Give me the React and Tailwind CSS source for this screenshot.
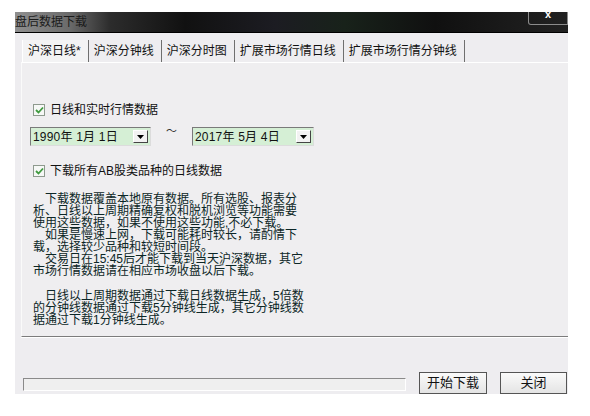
import React from 'react';

const tabs = ['沪深日线*', '沪深分钟线', '沪深分时图', '扩展市场行情日线', '扩展市场行情分钟线'];

const notes = [
  '　下载数据覆盖本地原有数据。所有选股、报表分',
  '析、日线以上周期精确复权和脱机浏览等功能需要',
  '使用这些数据，如果不使用这些功能,不必下载。',
  '　如果是慢速上网，下载可能耗时较长，请酌情下',
  '载，选择较少品种和较短时间段。',
  '　交易日在15:45后才能下载到当天沪深数据，其它',
  '市场行情数据请在相应市场收盘以后下载。',
  '',
  '　日线以上周期数据通过下载日线数据生成，5倍数',
  '的分钟线数据通过下载5分钟线生成，其它分钟线数',
  '据通过下载1分钟线生成。',
];

function Check() {
  return (
    <div className="w-[12px] h-[12px] border border-[#8e9a8e] bg-[#f6f8f6] flex items-center justify-center">
      <svg width="9" height="8" viewBox="0 0 9 8">
        <path d="M1 4 L3.5 6.5 L8 1.5" fill="none" stroke="#3f9a3f" strokeWidth="1.8" />
      </svg>
    </div>
  );
}

function DateBox({ text, w }) {
  return (
    <div className={`h-[19px] ${w} bg-[#d5efd5] border border-t-[#7a7a7a] border-l-[#7a7a7a] border-b-[#dcdcdc] border-r-[#dcdcdc] flex items-center justify-between pl-[2px] pr-[2px]`}>
      <span className="text-[12px] text-[#111] whitespace-pre tracking-[0.2px]">{text}</span>
      <div className="w-[15px] h-[13px] bg-[#f2f2f2] border border-t-white border-l-white border-b-[#444] border-r-[#444] flex items-center justify-center">
        <svg width="7" height="4" viewBox="0 0 7 4"><path d="M0 0 H7 L3.5 4 Z" fill="#000" /></svg>
      </div>
    </div>
  );
}

export default function App() {
  return (
    <div
      className="w-[590px] h-[416px] bg-white pt-[12px] pl-[15px] overflow-hidden"
      style={{ fontFamily: '"Liberation Sans", "Noto Sans CJK SC", sans-serif' }}
    >
      <div className="w-[553px] h-[382px] bg-[#eeedf0] flex flex-col">
        {/* title bar */}
        <div className="relative h-[21px] border-b border-black bg-[linear-gradient(90deg,#8f8f8f_0px,#6a6a6a_55px,#2c2c2c_95px,#111_170px,#1c1c22_260px,#18221a_330px,#101010_420px,#222_553px)] flex items-center">
          <span className="text-[12px] text-[#1b1b1b] leading-none">盘后数据下载</span>
          <div className="absolute right-0 top-0 w-[40px] h-[13px] border border-t-0 border-[#8c8c8c] rounded-bl-[3px] flex justify-center">
            <span className="text-white text-[11px] font-bold leading-[7px] -mt-[1px]">x</span>
          </div>
        </div>

        {/* tabs */}
        <div className="pt-[7px] pl-[7px] flex h-[29px]">
          {tabs.map((t, i) => (
            <div
              key={t}
              className={`h-[22px] flex items-center pl-[5px] pr-[7px] border-r border-[#6f6f6f] text-[12px] text-[#111] whitespace-pre ${i === 0 ? 'bg-[#f3f3f4] border-l border-l-white' : ''}`}
            >
              {t}
            </div>
          ))}
        </div>

        {/* panel */}
        <div className="ml-[6px] h-[275px] border-t border-l border-t-white border-l-[#fafafa] border-b border-b-[#7c7c7c] shadow-[0_1px_0_#fff] bg-[#efeef0] pl-[8px] pt-[41px]">
          <div className="ml-[3px] flex items-center gap-[5px] h-[12px]">
            <Check />
            <span className="text-[12px] text-[#111]">日线和实时行情数据</span>
          </div>
          <div className="mt-[11px] flex items-center">
            <DateBox text="1990年 1月 1日" w="w-[121px]" />
            <span className="ml-[15px] mr-[15px] text-[11px] text-[#333] -mt-[10px]">～</span>
            <DateBox text="2017年 5月 4日" w="w-[122px]" />
          </div>
          <div className="mt-[19px] ml-[3px] flex items-center gap-[5px] h-[12px]">
            <Check />
            <span className="text-[12px] text-[#111]">下载所有AB股类品种的日线数据</span>
          </div>
          <div className="mt-[16px] ml-[3px] text-[12px] leading-[12px] text-[#0c2626]">
            {notes.map((l, i) => (
              <div key={i} className={`whitespace-pre ${l === '' ? 'h-[13px]' : 'h-[12px]'}`}>{l}</div>
            ))}
          </div>
        </div>

        {/* bottom */}
        <div className="mt-[35px] pl-[8px] flex items-end h-[22px]">
          <div className="w-[383px] h-[13px] mb-[3px] border border-t-[#8a8a8a] border-l-[#8a8a8a] border-b-white border-r-white bg-[#efefef]" />
          <button className="ml-[13px] w-[68px] h-[22px] border border-[#555] bg-[linear-gradient(#fafafa,#e4e4e4)] text-[13px] text-[#111]">开始下载</button>
          <button className="ml-[13px] w-[67px] h-[22px] border border-[#555] bg-[linear-gradient(#fafafa,#e4e4e4)] text-[13px] text-[#111]">关闭</button>
        </div>
      </div>
    </div>
  );
}
